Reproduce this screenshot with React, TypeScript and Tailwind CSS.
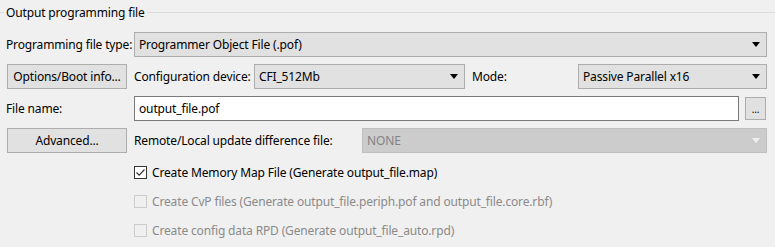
import React from "react";

const Arrow = ({ disabled = false }: { disabled?: boolean }) => (
  <svg width="8" height="5" viewBox="0 0 8 5" className="shrink-0">
    <path d="M0 0 L8 0 L4 5 Z" fill={disabled ? "#f0f0f0" : "#000"} />
  </svg>
);

const Combo = ({ text, className = "", disabled = false }: { text: string; className?: string; disabled?: boolean }) => (
  <div
    className={`h-[25px] flex items-center justify-between border pl-[4px] pr-[6px] ${
      disabled ? "bg-[#cccccc] border-[#bfbfbf] text-[#838383]" : "bg-[#e1e1e1] border-[#adadad] text-black"
    } ${className}`}
  >
    <span>{text}</span>
    <Arrow disabled={disabled} />
  </div>
);

const Btn = ({ text, className = "" }: { text: string; className?: string }) => (
  <div className={`h-[25px] flex items-center justify-center bg-[#e1e1e1] border border-[#adadad] text-black ${className}`}>
    {text}
  </div>
);

const Check = ({ checked, disabled, text }: { checked?: boolean; disabled?: boolean; text: string }) => (
  <div className={`flex items-center h-[29px] ${disabled ? "text-[#8a8a8a]" : "text-black"}`}>
    <div
      className={`w-[13px] h-[13px] border flex items-center justify-center ${
        disabled ? "border-[#cccccc] bg-[#f0f0f0]" : "border-[#333333] bg-white"
      }`}
    >
      {checked && (
        <svg width="11" height="11" viewBox="0 0 11 11">
          <path d="M1.5 5.5 L4.2 8.2 L9.5 2.5" stroke="#333" strokeWidth="1.2" fill="none" />
        </svg>
      )}
    </div>
    <span className="ml-[5px]">{text}</span>
  </div>
);

export default function App() {
  return (
    <div
      className="w-[775px] h-[247px] bg-[#f0f0f0] text-[12px] leading-none overflow-hidden whitespace-nowrap tracking-[-0.15px]"
      style={{ fontFamily: '"Noto Sans", "Open Sans", sans-serif' }}
    >
      <div className="flex items-center h-[24px] pt-[1px]">
        <div className="w-[4px] h-px bg-[#dcdcdc]" />
        <span className="px-[2px] text-black">Output programming file</span>
        <div className="flex-1 h-px bg-[#dcdcdc]" />
      </div>
      <div className="pl-[6px] pr-[8px] pt-[8px]">
        <div className="flex items-center h-[25px]">
          <div className="w-[128px]">Programming file type:</div>
          <Combo text="Programmer Object File (.pof)" className="flex-1" />
        </div>
        <div className="flex items-center h-[25px] mt-[7px]">
          <div className="w-[128px]">
            <Btn text="Options/Boot info..." className="w-[120px] ml-[1px]" />
          </div>
          <div className="w-[120px]">Configuration device:</div>
          <Combo text="CFI_512Mb" className="w-[211px]" />
          <div className="w-[113px] pl-[7px]">Mode:</div>
          <Combo text="Passive Parallel x16" className="flex-1" />
        </div>
        <div className="flex items-center h-[25px] mt-[7px]">
          <div className="w-[128px]">File name:</div>
          <div className="w-[605px] h-[25px] bg-white border border-[#7a7a7a] flex items-center pl-[4px]">
            output_file.pof
          </div>
          <div className="ml-[6px] w-[21px] h-[23px] bg-[#e1e1e1] border border-[#adadad] flex items-end justify-center pb-[5px] text-[10px]">
            ...
          </div>
        </div>
        <div className="flex items-center h-[25px] mt-[7px]">
          <div className="w-[128px]">
            <Btn text="Advanced..." className="w-[120px] ml-[1px]" />
          </div>
          <div className="w-[228px]">Remote/Local update difference file:</div>
          <Combo text="NONE" className="flex-1" disabled />
        </div>
        <div className="pl-[128px] mt-[5px]">
          <Check checked text="Create Memory Map File (Generate output_file.map)" />
          <Check disabled text="Create CvP files (Generate output_file.periph.pof and output_file.core.rbf)" />
          <Check disabled text="Create config data RPD (Generate output_file_auto.rpd)" />
        </div>
      </div>
    </div>
  );
}
